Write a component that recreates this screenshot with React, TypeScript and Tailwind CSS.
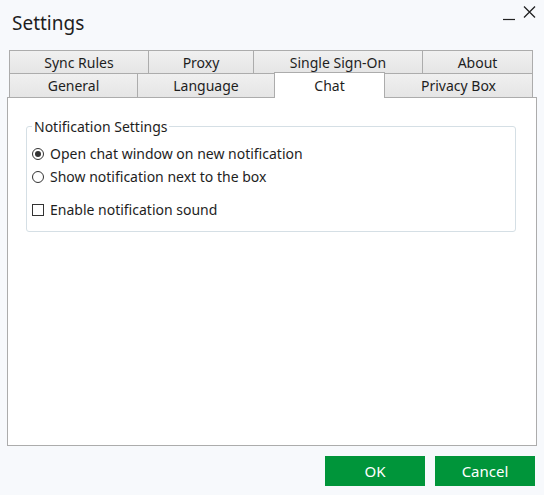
import React from 'react';

const font = { fontFamily: '"Noto Sans", "Open Sans", sans-serif' };

const Tab = ({ label, w, active }: { label: string; w: string; active?: boolean }) => (
  <div
    className={`${w} -ml-px first:ml-0 flex items-center justify-center border border-b-0 border-[#acacac] text-[14px] text-[#1e1e1e] ${
      active ? 'relative z-10 h-[26px] -mt-px -mb-px bg-white' : 'h-full bg-gradient-to-b from-[#f0f0f0] to-[#e5e5e5]'
    }`}
  >
    {label}
  </div>
);

const Radio = ({ checked, label }: { checked?: boolean; label: string }) => (
  <label className="flex items-center gap-[6px] h-[23px]">
    <span className="w-[12px] h-[12px] rounded-full border border-[#333] bg-white flex items-center justify-center">
      {checked && <span className="w-[6px] h-[6px] rounded-full bg-[#333]" />}
    </span>
    {label}
  </label>
);

export default function App() {
  return (
    <div className="w-[544px] h-[495px] bg-[#f7f9fc] flex flex-col text-[#1e1e1e]" style={font}>
      <div className="h-[50px] flex items-start justify-between pl-[12px] pr-[8px]">
        <h1 className="text-[19px] mt-[10px] leading-[26px]">Settings</h1>
        <div className="flex items-center gap-[8px] mt-[5px]">
          <svg width="12" height="16" viewBox="0 0 12 16">
            <path d="M0 14.5h12" stroke="#222" strokeWidth="1.2" />
          </svg>
          <svg width="13" height="16" viewBox="0 0 13 16">
            <path d="M1 1.5l11 11M12 1.5l-11 11" stroke="#222" strokeWidth="1.3" />
          </svg>
        </div>
      </div>

      <div className="ml-[9px] flex h-[24px]">
        <Tab label="Sync Rules" w="w-[140px]" />
        <Tab label="Proxy" w="w-[106px]" />
        <Tab label="Single Sign-On" w="w-[170px]" />
        <Tab label="About" w="w-[111px]" />
      </div>
      <div className="ml-[9px] flex h-[24px] -mt-px">
        <Tab label="General" w="w-[129px]" />
        <Tab label="Language" w="w-[138px]" />
        <Tab label="Chat" w="w-[111px]" active />
        <Tab label="Privacy Box" w="w-[149px]" />
      </div>

      <div className="mx-[7px] w-[530px] h-[349px] border border-[#acacac] bg-white pl-[18px] pr-[20px] pt-[19px]">
        <fieldset className="border border-[#d5dfe5] rounded-[3px] h-[115px] px-[5px] text-[14px]">
          <legend className="ml-0 px-[2px] leading-[19px]">Notification Settings</legend>
          <div className="mt-[6px]">
            <Radio checked label="Open chat window on new notification" />
            <Radio label="Show notification next to the box" />
            <label className="flex items-center gap-[6px] h-[23px] mt-[10px]">
              <span className="w-[12px] h-[12px] border border-[#333] bg-white" />
              Enable notification sound
            </label>
          </div>
        </fieldset>
      </div>

      <div className="flex justify-end gap-[10px] pr-[9px] mt-[10px]">
        <button className="w-[100px] h-[30px] bg-[#00953a] text-white text-[15px]">OK</button>
        <button className="w-[100px] h-[30px] bg-[#00953a] text-white text-[15px]">Cancel</button>
      </div>
    </div>
  );
}
